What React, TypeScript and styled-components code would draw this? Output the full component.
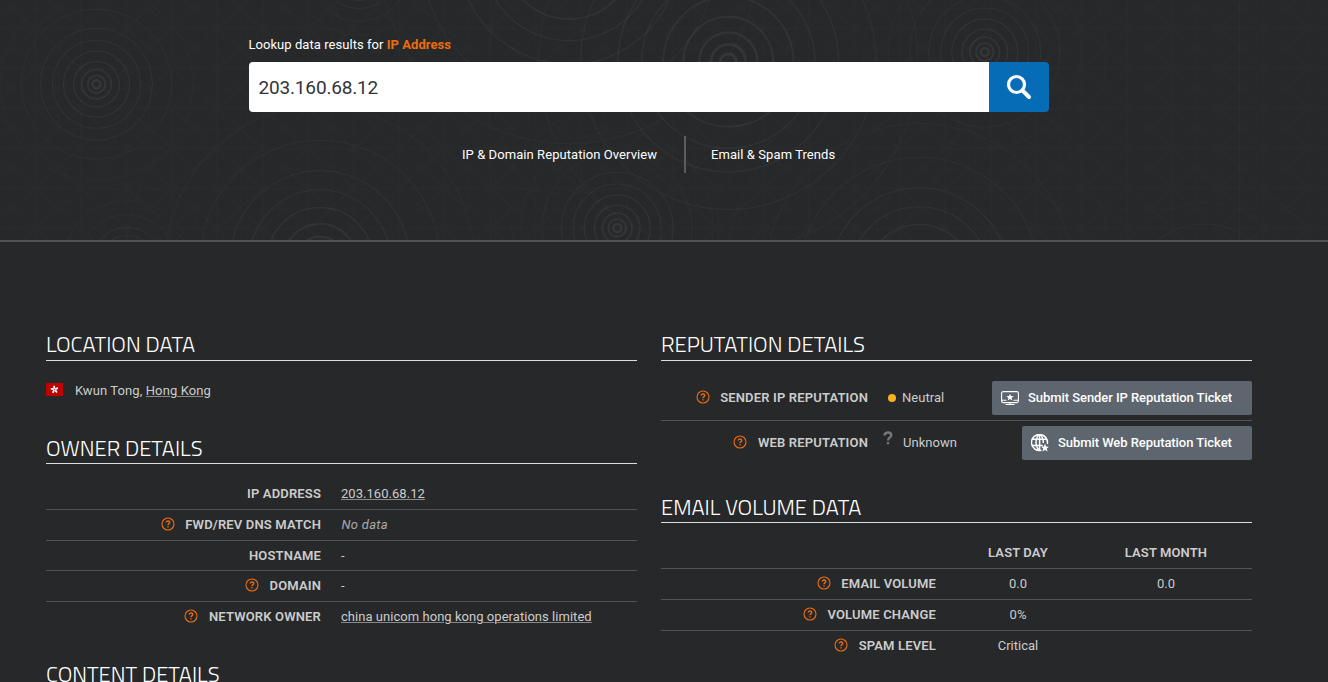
import React from 'react';
import styled, { createGlobalStyle } from 'styled-components';

const Global = createGlobalStyle`
  *{box-sizing:border-box}
  html,body{margin:0;background:#27282a;overflow:hidden}
  body{font:13px/20px Roboto,sans-serif;color:#ccc}
`;
const Page = styled.div`height:682px;overflow:hidden;background:#27282a;`;
const Hero = styled.header`
  position:relative;height:242px;border-bottom:2px solid #525358;overflow:hidden;
`;
const Backdrop = styled.svg`position:absolute;inset:0;display:block;`;
const SearchArea = styled.div`
  position:relative;width:801px;margin-left:248px;padding-top:35px;
  display:flex;flex-direction:column;
`;
const Lookup = styled.div`
  font-size:13px;line-height:20px;color:#fff;margin:0 0 7px .5px;letter-spacing:.05px;
`;
const Accent = styled.b`font-weight:700;color:#ee6c0f;`;
const SearchBar = styled.form`
  display:flex;height:50px;margin-left:1px;border-radius:4px;overflow:hidden;
`;
const Input = styled.input`
  flex:1;min-width:0;border:0;outline:0;padding:0 9.5px;background:#fff;
  color:#32343a;font:19px Roboto,sans-serif;letter-spacing:-.17px;
`;
const SearchButton = styled.button`
  width:60px;border:0;padding:0;background:#066cb6;display:flex;align-items:center;justify-content:center;
`;
const Links = styled.nav`display:flex;align-items:center;margin:24px 0 0 214px;height:37px;`;
const Link = styled.a`color:#fff;font-size:13px;letter-spacing:.07px;`;
const Divider = styled.span`width:2px;height:37px;background:#5b5c5e;margin:0 25px 0 27px;`;
const Columns = styled.main`
  display:grid;grid-template-columns:591px 591px;column-gap:24px;padding:88px 0 0 46px;
`;
const Section = styled.section<{ $h: number }>`height:${p => p.$h}px;`;
const Title = styled.h2<{ $line?: number }>`
  margin:0;height:31px;border-bottom:1px solid #dcdcdc;white-space:nowrap;
  font:300 22px/${p => p.$line ?? 29}px "Titillium Web","Exo 2",Roboto,sans-serif;color:#fff;
`;
const Location = styled.div`
  display:flex;align-items:center;padding-top:20px;gap:12px;letter-spacing:.1px;
  svg{margin-top:-3px}
`;
const Underlined = styled.a`
  color:#ccc;text-decoration:underline;text-decoration-color:#88898b;
  text-decoration-thickness:1px;text-underline-offset:1px;
`;
const Rows = styled.div`padding-top:15px;`;
const Row = styled.div<{ $h: number; $label: number }>`
  display:grid;grid-template-columns:${p => p.$label}px 1fr;column-gap:20px;align-items:center;
  height:${p => p.$h}px;border-bottom:1px solid #525358;
  &:last-child{border-bottom-color:transparent}
`;
const Label = styled.div`
  display:flex;justify-content:flex-end;align-items:center;gap:10.5px;
  font-weight:600;letter-spacing:.16px;white-space:nowrap;
  svg{margin-top:-2px}
`;
const Value = styled.div`display:flex;align-items:center;letter-spacing:.04px;`;
const NoData = styled.i`color:#aaa;margin-left:.5px;letter-spacing:.3px;`;
const Status = styled.span`width:8px;height:8px;border-radius:50%;background:#f9b122;margin-right:6px;`;
const Unknown = styled.svg`margin:-11px 10px 0 -5px;`;
const Submit = styled.button<{ $w: number }>`
  margin-left:auto;width:${p => p.$w}px;height:34px;border:0;border-radius:2px;background:#5d656e;
  color:#fff;font:500 13px/20px Roboto,sans-serif;letter-spacing:-.06px;
  display:flex;align-items:center;gap:9px;padding:0 0 0 9px;white-space:nowrap;
`;
const Volume = styled(Row)`grid-template-columns:275px 124px 132px;`;
const Cell = styled.div<{ $head?: boolean }>`
  text-align:center;font-weight:${p => (p.$head ? 600 : 400)};letter-spacing:${p => (p.$head ? 0.12 : 0)}px;
`;

const radii: [number, number][] = [
  [4, 2.4], [8.8, 2], [14.8, 1.8], [22.8, 1.5], [33, 1.3], [44, 1.1], [56, 1], [75, 0.9], [96.3, 0.8], [121.5, 0.7],
];
const alphas = [0.065, 0.06, 0.056, 0.052, 0.048, 0.044, 0.042, 0.036, 0.026, 0.018];
const ripples: [number, number, number][] = [
  [96.5, 84.2, 1], [984.8, 52, 1], [617.2, 228, 1], [728.3, 61.7, 1.97], [320, 260.3, 1.6],
  [919.3, 277.3, 1.6], [127.3, 265, 0.67], [569, -46, 1.97], [359, -29, 0.67], [1204.3, 299, 1], [960, -107, 1],
];

const Ripples = () => (
  <Backdrop width="1328" height="240" fill="none" stroke="#fff">
    <defs>
      <pattern id="grid" width="45.5" height="40" patternUnits="userSpaceOnUse" x="12.5" y="8.5">
        <path d="M0 0V40M22.75 0V40M0 0H45.5M0 20H45.5M0 0L45.5 40M45.5 0L0 40" stroke="#fff" strokeOpacity=".012" strokeWidth="1" />
      </pattern>
    </defs>
    <rect width="1328" height="240" fill="url(#grid)" stroke="none" />
    <path d="M1239.5 0V240" strokeOpacity=".025" />
    {ripples.map(([x, y, s], i) =>
      radii.map(([r, w], j) => (
        <circle key={`${i}-${j}`} cx={x} cy={y} r={r * s} strokeWidth={w * Math.max(1, Math.sqrt(s))} strokeOpacity={alphas[j]} />
      )),
    )}
  </Backdrop>
);

const Help = () => (
  <svg width="14" height="14" viewBox="0 0 14 14" fill="none" stroke="#ee6c0f">
    <circle cx="7" cy="7" r="6" strokeWidth="1.1" />
    <path d="M5.2 5.6C5.2 4.5 6 4 7 4s1.8.6 1.8 1.5C8.8 6.6 7 6.7 7 8.2" strokeWidth="1.3" />
    <path d="M7 9.2v1.4" strokeWidth="1.4" />
  </svg>
);
const Flag = () => (
  <svg width="17" height="13" viewBox="0 0 17 13">
    <path fill="#c00000" d="M0 0h17v13H0z" />
    <g fill="#fff">
      {[0, 72, 144, 216, 288].map(a => (
        <ellipse key={a} cx="8.5" cy="4.3" rx="1" ry="1.8" transform={`rotate(${a - 6} 8.5 6.5)`} />
      ))}
    </g>
  </svg>
);
const Monitor = () => (
  <svg width="18" height="15" viewBox="0 0 18 15" fill="none" stroke="#fff">
    <rect x=".6" y=".6" width="16.8" height="11" rx="1.6" strokeWidth="1.1" />
    <path d="M1 9.2h4.500M12.500 9.200H17M4.500 13.500h9M9 11.800V14" strokeWidth="1.1" />
    <path d="m9 2.700 1 2.300 2.600.2-2 1.700.7 2.600L9 8.100 6.700 9.500l.7-2.600-2-1.700L8 5z" fill="#fff" stroke="none" />
  </svg>
);
const GlobeStar = () => (
  <svg width="18" height="18" viewBox="0 0 18 18" fill="none" stroke="#fff" strokeWidth="1.5">
    <path d="M10.5 16.2A8 8 0 1 1 16.3 10M10 16.400c-2 .5-5-2.500-5-7.700C5 4 7 .8 8.600.8S12.300 4 12.300 9M8.600.8V16M1.800 5.300h13.600M.8 11.400h11" />
    <path d="m14 9.800 1.200 2.700 2.800.2-2.200 1.900.8 3L14 16l-2.500 1.600.8-3-2.200-1.900 2.800-.2z" fill="#fff" stroke="none" />
  </svg>
);

const LabelCell = ({ text, help }: { text: string; help?: boolean }) => (
  <Label>{help && <Help />}<span>{text}</span></Label>
);

export default function App() {
  return (
    <Page>
      <Global />
      <Hero>
        <Ripples />
        <SearchArea>
          <Lookup>Lookup data results for <Accent>IP Address</Accent></Lookup>
          <SearchBar>
            <Input defaultValue="203.160.68.12" />
            <SearchButton type="button" aria-label="Search">
              <svg width="26" height="26" viewBox="0 0 26 26" fill="none" stroke="#fff">
                <circle cx="10.5" cy="10.5" r="8" strokeWidth="3.2" />
                <path d="m16.5 16.5 6.5 6.5" strokeWidth="4" strokeLinecap="round" />
              </svg>
            </SearchButton>
          </SearchBar>
          <Links>
            <Link>IP &amp; Domain Reputation Overview</Link>
            <Divider />
            <Link>Email &amp; Spam Trends</Link>
          </Links>
        </SearchArea>
      </Hero>
      <Columns>
        <div>
          <Section $h={103}>
            <Title>LOCATION DATA</Title>
            <Location><Flag /><span>Kwun Tong, <Underlined>Hong Kong</Underlined></span></Location>
          </Section>
          <Section $h={227}>
            <Title $line={31}>OWNER DETAILS</Title>
            <Rows>
              <Row $h={31} $label={275}><LabelCell text="IP ADDRESS" /><Value><Underlined>203.160.68.12</Underlined></Value></Row>
              <Row $h={31} $label={275}><LabelCell help text="FWD/REV DNS MATCH" /><Value><NoData>No data</NoData></Value></Row>
              <Row $h={30} $label={275}><LabelCell text="HOSTNAME" /><Value>-</Value></Row>
              <Row $h={31} $label={275}><LabelCell help text="DOMAIN" /><Value>-</Value></Row>
              <Row $h={31} $label={275}><LabelCell help text="NETWORK OWNER" /><Value><Underlined>china unicom hong kong operations limited</Underlined></Value></Row>
            </Rows>
          </Section>
          <Section $h={60}><Title>CONTENT DETAILS</Title></Section>
        </div>
        <div>
          <Section $h={162}>
            <Title>REPUTATION DETAILS</Title>
            <Rows>
              <Row $h={45} $label={207}>
                <LabelCell help text="SENDER IP REPUTATION" />
                <Value><Status />Neutral<Submit $w={260}><Monitor />Submit Sender IP Reputation Ticket</Submit></Value>
              </Row>
              <Row $h={45} $label={207}>
                <LabelCell help text="WEB REPUTATION" />
                <Value>
                  <Unknown width="10" height="14" viewBox="0 0 10 14" fill="none" stroke="#77787a" strokeWidth="2.3">
                    <path d="M1.5 4.500C1.500 2.500 3 1.500 5 1.500s3.300 1 3.300 2.700C8.300 6.500 5 6.500 5 9.500M5 11v2.300" />
                  </Unknown>
                  Unknown
                  <Submit $w={230}><GlobeStar />Submit Web Reputation Ticket</Submit>
                </Value>
              </Row>
            </Rows>
          </Section>
          <Section $h={160}>
            <Title $line={31}>EMAIL VOLUME DATA</Title>
            <Rows>
              <Volume $h={31} $label={275}><span /><Cell $head>LAST DAY</Cell><Cell $head>LAST MONTH</Cell></Volume>
              <Volume $h={31} $label={275}><LabelCell help text="EMAIL VOLUME" /><Cell>0.0</Cell><Cell>0.0</Cell></Volume>
              <Volume $h={31} $label={275}><LabelCell help text="VOLUME CHANGE" /><Cell>0%</Cell></Volume>
              <Volume $h={31} $label={275}><LabelCell help text="SPAM LEVEL" /><Cell>Critical</Cell></Volume>
            </Rows>
          </Section>
        </div>
      </Columns>
    </Page>
  );
}
